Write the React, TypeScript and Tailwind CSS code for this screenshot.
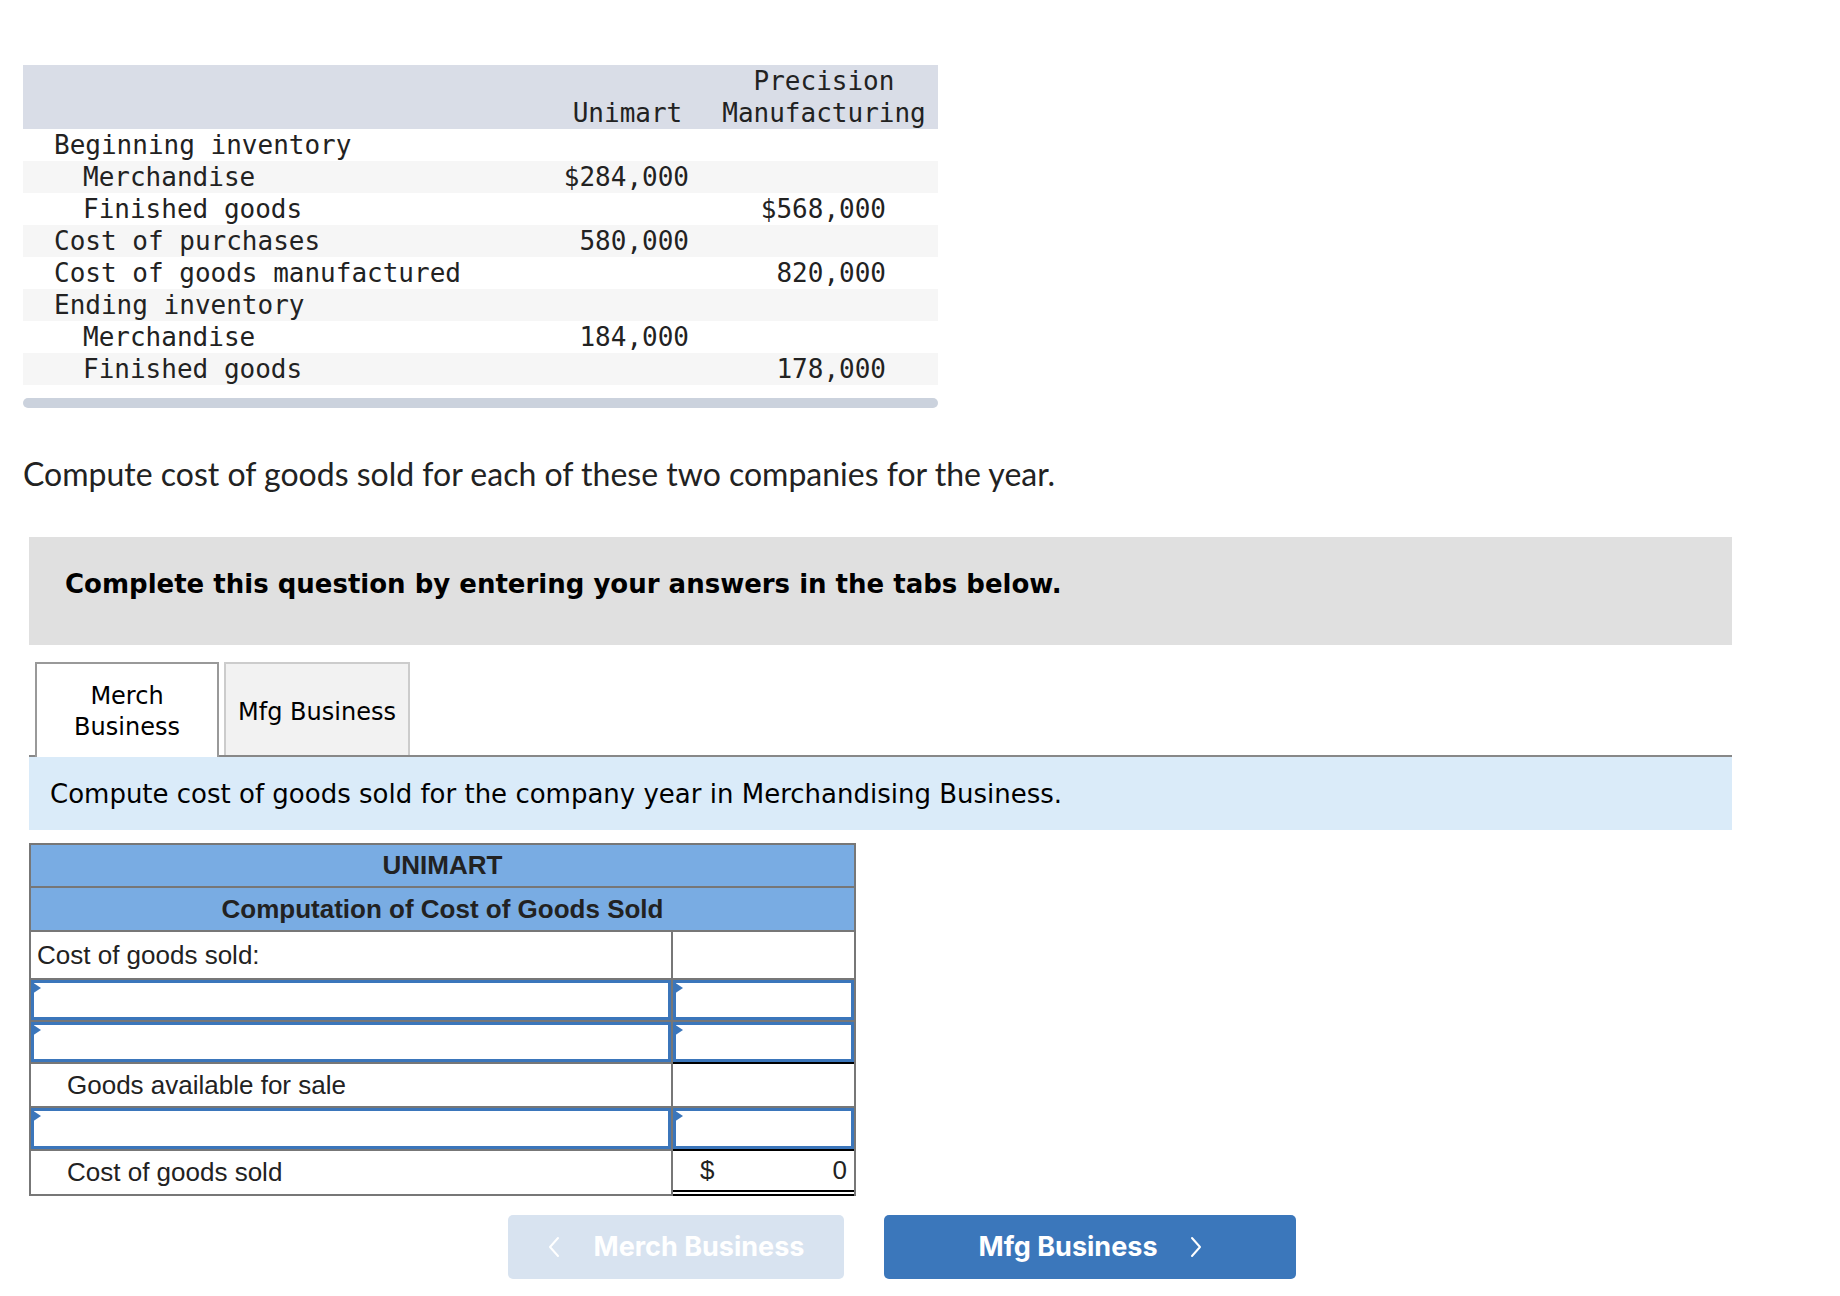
import type { ReactNode } from 'react'

const dataRows = [
  { label: 'Beginning inventory', sub: false, a: '', b: '' },
  { label: 'Merchandise', sub: true, a: '$284,000', b: '' },
  { label: 'Finished goods', sub: true, a: '', b: '$568,000' },
  { label: 'Cost of purchases', sub: false, a: '580,000', b: '' },
  { label: 'Cost of goods manufactured', sub: false, a: '', b: '820,000' },
  { label: 'Ending inventory', sub: false, a: '', b: '' },
  { label: 'Merchandise', sub: true, a: '184,000', b: '' },
  { label: 'Finished goods', sub: true, a: '', b: '178,000' },
]

function InputBox() {
  return (
    <div className="relative h-full w-full border-[3px] border-[#3b76bb] bg-white">
      <span className="absolute -left-[2px] -top-[1px] h-0 w-0 border-y-[6px] border-l-[9px] border-y-transparent border-l-[#3b76bb]" />
    </div>
  )
}

function Row({
  h,
  left,
  right,
  leftBorder = 'border-[#777]',
  rightBorder = 'border-b-2 border-[#777]',
}: {
  h: string
  left: ReactNode
  right: ReactNode
  leftBorder?: string
  rightBorder?: string
}) {
  return (
    <div className={`flex ${h}`}>
      <div className={`w-[642px] border-r-2 border-b-2 ${leftBorder}`}>{left}</div>
      <div className={`flex-1 ${rightBorder}`}>{right}</div>
    </div>
  )
}

function Chevron({ dir }: { dir: 'left' | 'right' }) {
  return (
    <svg width="12" height="22" viewBox="0 0 12 22" fill="none">
      <polyline
        points={dir === 'right' ? '2,2 10,11 2,20' : '10,2 2,11 10,20'}
        stroke="currentColor"
        strokeWidth="2"
        strokeLinecap="round"
        strokeLinejoin="round"
      />
    </svg>
  )
}

export default function App() {
  return (
    <main className="min-h-screen bg-white pl-[23px] pt-[65px] text-[#222]">
      {/* given data */}
      <section className="w-[915px] font-['DejaVu_Sans_Mono',monospace] text-[26px] leading-[32px]">
        <div className="grid h-[64px] grid-cols-[527px_155px_233px] items-end bg-[#d9dde7]">
          <div />
          <div className="text-center">Unimart</div>
          <div className="pl-[5px] text-center">
            Precision
            <br />
            Manufacturing
          </div>
        </div>
        {dataRows.map((row, i) => (
          <div
            key={i}
            className={`grid h-[32px] grid-cols-[527px_155px_233px] items-center ${
              i % 2 === 1 ? 'bg-[#f6f6f6]' : 'bg-white'
            }`}
          >
            <div className={row.sub ? 'pl-[60px]' : 'pl-[31px]'}>{row.label}</div>
            <div className="pr-[16px] text-right">{row.a}</div>
            <div className="pr-[52px] text-right">{row.b}</div>
          </div>
        ))}
      </section>
      <div className="mt-[13px] h-[10px] w-[915px] rounded-full bg-[#cbd2dd]" />

      <p className="mt-[48px] font-['Lato',sans-serif] text-[32px] leading-[36px] text-[#222]">
        Compute cost of goods sold for each of these two companies for the year.
      </p>

      <section className="ml-[6px] mt-[45px] w-[1703px] font-['DejaVu_Sans',Verdana,sans-serif] text-black">
        <div className="h-[108px] bg-[#e0e0e0] pl-[36px] pt-[31px] text-[26px] font-bold leading-[32px]">
          Complete this question by entering your answers in the tabs below.
        </div>

        <div className="mt-[17px] flex h-[95px] items-end gap-[5px] border-b-2 border-[#888] pl-[6px] text-[24px]">
          <div className="-mb-[2px] flex h-[95px] w-[184px] items-center justify-center border-x-2 border-t-2 border-[#999] bg-white pt-[2px] text-center leading-[31px]">
            Merch
            <br />
            Business
          </div>
          <div className="flex h-[93px] w-[186px] items-center justify-center border-x-2 border-t-2 border-[#ccc] bg-[#f2f2f2] pt-[4px]">
            Mfg Business
          </div>
        </div>

        <div className="flex h-[73px] items-center bg-[#daebf9] pl-[21px] pt-[2px] text-[26px]">
          Compute cost of goods sold for the company year in Merchandising Business.
        </div>

        {/* answer table */}
        <div className="mt-[13px] w-[827px] border-x-2 border-t-2 border-[#777] font-['Liberation_Sans',Arial,sans-serif] text-[26px] text-[#222]">
          <div className="flex h-[43px] items-center justify-center border-b-2 border-[#777] bg-[#79ace3] font-bold">
            UNIMART
          </div>
          <div className="flex h-[44px] items-center justify-center border-b-2 border-[#777] bg-[#79ace3] font-bold">
            Computation of Cost of Goods Sold
          </div>
          <Row
            h="h-[48px]"
            left={<div className="flex h-full items-center pl-[6px]">Cost of goods sold:</div>}
            right={null}
          />
          <Row h="h-[42px]" left={<InputBox />} right={<InputBox />} />
          <Row
            h="h-[42px]"
            left={<InputBox />}
            right={<InputBox />}
            rightBorder="border-b-2 border-black"
          />
          <Row
            h="h-[44px]"
            left={<div className="flex h-full items-center pl-[36px]">Goods available for sale</div>}
            right={null}
          />
          <Row
            h="h-[43px]"
            left={<InputBox />}
            right={<InputBox />}
            rightBorder="border-b-2 border-black"
          />
          <Row
            h="h-[45px]"
            left={<div className="flex h-full items-center pl-[36px]">Cost of goods sold</div>}
            right={
              <div className="flex h-full items-center justify-between pl-[27px] pr-[7px]">
                <span>$</span>
                <span>0</span>
              </div>
            }
            rightBorder="border-b-[6px] border-double border-black"
          />
        </div>

        <div className="ml-[479px] mt-[19px] flex gap-[40px] font-['Inter',sans-serif] text-[27px] font-bold text-white">
          <button
            type="button"
            disabled
            className="flex h-[64px] w-[336px] items-center justify-center gap-[34px] rounded-[5px] bg-[#d8e3f0]"
          >
            <Chevron dir="left" />
            <span>Merch Business</span>
          </button>
          <button
            type="button"
            className="flex h-[64px] w-[412px] items-center justify-center gap-[32px] rounded-[5px] bg-[#3b77bb]"
          >
            <span>Mfg Business</span>
            <Chevron dir="right" />
          </button>
        </div>
      </section>
    </main>
  )
}
